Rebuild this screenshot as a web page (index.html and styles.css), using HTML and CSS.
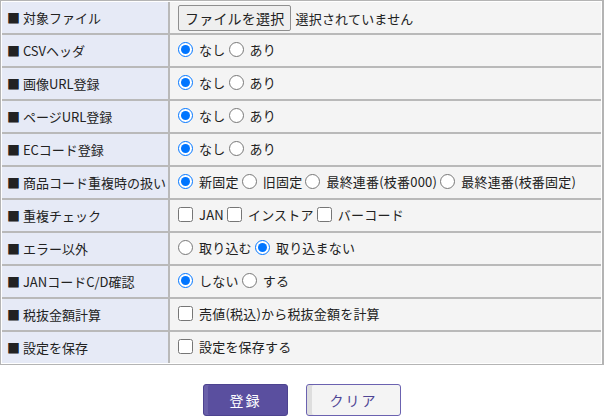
FILE: index.html
```html
<!DOCTYPE html>
<html lang="ja">
<head>
  <meta charset="UTF-8" />
  <title>取込設定</title>
  <link rel="stylesheet" href="styles.css">
</head>
<body>
  <div class="frame">
    <table class="form-table">
      <tr>
        <th>■ 対象ファイル</th>
        <td><span class="file-btn">ファイルを選択</span> 選択されていません</td>
      </tr>
      <tr>
        <th>■ CSVヘッダ</th>
        <td><label><input type="radio" name="csv" checked> なし</label> <label><input type="radio" name="csv"> あり</label></td>
      </tr>
      <tr>
        <th>■ 画像URL登録</th>
        <td><label><input type="radio" name="img" checked> なし</label> <label><input type="radio" name="img"> あり</label></td>
      </tr>
      <tr>
        <th>■ ページURL登録</th>
        <td><label><input type="radio" name="page" checked> なし</label> <label><input type="radio" name="page"> あり</label></td>
      </tr>
      <tr>
        <th>■ ECコード登録</th>
        <td><label><input type="radio" name="ec" checked> なし</label> <label><input type="radio" name="ec"> あり</label></td>
      </tr>
      <tr>
        <th>■ 商品コード重複時の扱い</th>
        <td><label><input type="radio" name="dup" checked> 新固定</label> <label><input type="radio" name="dup"> 旧固定</label> <label><input type="radio" name="dup"> 最終連番(枝番000)</label> <label><input type="radio" name="dup"> 最終連番(枝番固定)</label></td>
      </tr>
      <tr>
        <th>■ 重複チェック</th>
        <td><label><input type="checkbox"> JAN</label> <label><input type="checkbox"> インストア</label> <label><input type="checkbox"> バーコード</label></td>
      </tr>
      <tr>
        <th>■ エラー以外</th>
        <td><label><input type="radio" name="err"> 取り込む</label> <label><input type="radio" name="err" checked> 取り込まない</label></td>
      </tr>
      <tr>
        <th>■ JANコードC/D確認</th>
        <td><label><input type="radio" name="cd" checked> しない</label> <label><input type="radio" name="cd"> する</label></td>
      </tr>
      <tr>
        <th>■ 税抜金額計算</th>
        <td><label><input type="checkbox"> 売値(税込)から税抜金額を計算</label></td>
      </tr>
      <tr>
        <th>■ 設定を保存</th>
        <td><label><input type="checkbox"> 設定を保存する</label></td>
      </tr>
    </table>
  </div>

  <div class="actions">
    <button class="btn btn-primary">登録</button>
    <button class="btn btn-clear">クリア</button>
  </div>
</body>
</html>
```

FILE: styles.css
```css
body {
  margin: 0;
  font-family: "Noto Sans CJK JP", "Noto Sans", sans-serif;
  font-size: 13px;
  color: #222;
  background: #fff;
}
.frame {
  border: 1px solid #b4b4b4;
  border-right-width: 2px;
  padding: 1px;
}
.form-table {
  width: 100%;
  border-collapse: collapse;
}
.form-table th,
.form-table td {
  height: 31px;
  padding: 0 0 0 5px;
  border: 2px solid #b9b9b9;
  text-align: left;
  font-weight: normal;
  white-space: nowrap;
}
.form-table tr:first-child th,
.form-table tr:first-child td {
  border-top: 0;
}
.form-table tr:last-child th,
.form-table tr:last-child td {
  border-bottom: 0;
}
.form-table th {
  width: 161px;
  background: #e6eaf6;
  border-left: 0;
}
.form-table td {
  background: #f4f4f4;
  padding-left: 8px;
  border-right: 0;
  letter-spacing: 0.2px;
}
.form-table label {
  display: inline-flex;
  align-items: center;
}
.form-table input {
  margin: 0 6px 0 0;
  width: 15px;
  height: 15px;
}
.file-btn {
  display: inline-block;
  padding: 2px 6px;
  border: 1px solid #8f8f8f;
  border-radius: 2px;
  background: #efefef;
  font-size: 14px;
  margin-right: 1px;
}
.actions {
  display: flex;
  justify-content: center;
  gap: 18px;
  margin-top: 19px;
}
.btn {
  height: 32px;
  font-family: inherit;
  font-size: 14px;
  letter-spacing: 2px;
  border-radius: 3px;
  cursor: pointer;
}
.btn-primary {
  width: 85px;
  background: #5a4f9f;
  color: #fff;
  border: 1px solid #4d438f;
  box-shadow: inset 4px 0 0 #6a60aa;
}
.btn-clear {
  width: 95px;
  background: #f4f4f4;
  color: #4f4594;
  border: 1px solid #6b62b0;
  box-shadow: inset 5px 0 0 #dedede;
}
```
